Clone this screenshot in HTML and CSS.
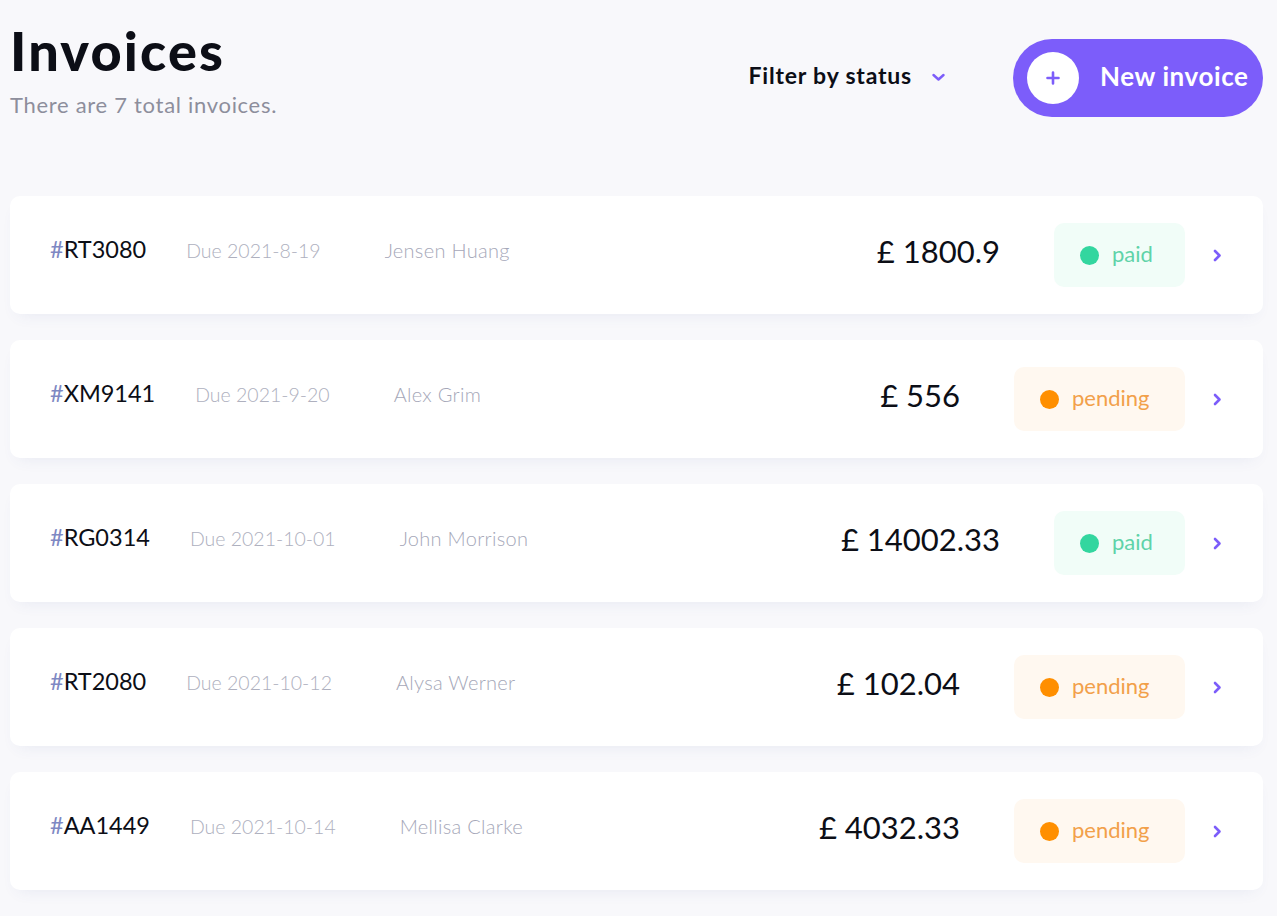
FILE: index.html
```html
<!DOCTYPE html>
<html lang="en">
<head>
<meta charset="utf-8">
<title>Invoices</title>
<link rel="stylesheet" href="styles.css">
</head>
<body>
<main class="page">
  <header class="top">
    <div class="titles">
      <h1 class="title">Invoices</h1>
      <p class="subtitle">There are 7 total invoices.</p>
    </div>
    <div class="actions">
      <button class="filter">Filter by status
        <svg class="filter-chev" width="13" height="9" viewBox="0 0 13 9"><path d="M1.5 2 L6.5 6.5 L11.5 2" fill="none" stroke="#7C5DFA" stroke-width="2.4" stroke-linecap="round" stroke-linejoin="round"/></svg>
      </button>
      <button class="new-btn">
        <span class="plus-circle"><svg width="14" height="14" viewBox="0 0 14 14"><path d="M7 1.5 V12.5 M1.5 7 H12.5" stroke="#7C5DFA" stroke-width="2.6" stroke-linecap="round"/></svg></span>
        <span class="new-label">New invoice</span>
      </button>
    </div>
  </header>

  <section class="list">
    <article class="card">
      <div class="left"><span class="id"><span class="hash">#</span>RT3080</span><span class="due">Due 2021-8-19</span><span class="name">Jensen Huang</span></div>
      <span class="amount">£ 1800.9</span>
      <span class="badge paid"><span class="dot"></span>paid</span>
      <svg class="chev" width="9" height="13" viewBox="0 0 9 13"><path d="M2 2 L6.5 6.5 L2 11" fill="none" stroke="#7C5DFA" stroke-width="2.6" stroke-linecap="round" stroke-linejoin="round"/></svg>
    </article>
    <article class="card">
      <div class="left"><span class="id"><span class="hash">#</span>XM9141</span><span class="due">Due 2021-9-20</span><span class="name">Alex Grim</span></div>
      <span class="amount">£ 556</span>
      <span class="badge pending"><span class="dot"></span>pending</span>
      <svg class="chev" width="9" height="13" viewBox="0 0 9 13"><path d="M2 2 L6.5 6.5 L2 11" fill="none" stroke="#7C5DFA" stroke-width="2.6" stroke-linecap="round" stroke-linejoin="round"/></svg>
    </article>
    <article class="card">
      <div class="left"><span class="id"><span class="hash">#</span>RG0314</span><span class="due">Due 2021-10-01</span><span class="name">John Morrison</span></div>
      <span class="amount">£ 14002.33</span>
      <span class="badge paid"><span class="dot"></span>paid</span>
      <svg class="chev" width="9" height="13" viewBox="0 0 9 13"><path d="M2 2 L6.5 6.5 L2 11" fill="none" stroke="#7C5DFA" stroke-width="2.6" stroke-linecap="round" stroke-linejoin="round"/></svg>
    </article>
    <article class="card">
      <div class="left"><span class="id"><span class="hash">#</span>RT2080</span><span class="due">Due 2021-10-12</span><span class="name">Alysa Werner</span></div>
      <span class="amount">£ 102.04</span>
      <span class="badge pending"><span class="dot"></span>pending</span>
      <svg class="chev" width="9" height="13" viewBox="0 0 9 13"><path d="M2 2 L6.5 6.5 L2 11" fill="none" stroke="#7C5DFA" stroke-width="2.6" stroke-linecap="round" stroke-linejoin="round"/></svg>
    </article>
    <article class="card">
      <div class="left"><span class="id"><span class="hash">#</span>AA1449</span><span class="due">Due 2021-10-14</span><span class="name">Mellisa Clarke</span></div>
      <span class="amount">£ 4032.33</span>
      <span class="badge pending"><span class="dot"></span>pending</span>
      <svg class="chev" width="9" height="13" viewBox="0 0 9 13"><path d="M2 2 L6.5 6.5 L2 11" fill="none" stroke="#7C5DFA" stroke-width="2.6" stroke-linecap="round" stroke-linejoin="round"/></svg>
    </article>
    <div class="card card-peek"></div>
  </section>
</main>
</body>
</html>
```

FILE: styles.css
```css
* { box-sizing: border-box; }

html, body {
  margin: 0;
  padding: 0;
  background: #F8F8FB;
  overflow: hidden;
}

body {
  font-family: "Lato", "Noto Sans", sans-serif;
  color: #0C0E16;
}

.page {
  padding: 20px 14px 0 10px;
}

.top {
  display: flex;
  align-items: flex-start;
  justify-content: space-between;
  height: 176px;
}

.title {
  margin: 0;
  font-size: 54px;
  font-weight: 900;
  line-height: 62px;
  letter-spacing: 2.2px;
}

.subtitle {
  margin: 10px 0 0;
  font-size: 22px;
  font-weight: 400;
  color: #8D8E9C;
  line-height: 26px;
  letter-spacing: 0.7px;
}

.actions {
  display: flex;
  align-items: center;
  gap: 68px;
  margin-top: 19px;
}

.filter {
  display: flex;
  align-items: center;
  gap: 20px;
  border: 0;
  background: none;
  padding: 0 0 6px;
  font-family: inherit;
  font-size: 23px;
  font-weight: 700;
  letter-spacing: 0.8px;
  color: #0C0E16;
}

.filter-chev { margin-top: 4px; }

.new-btn {
  display: flex;
  align-items: center;
  gap: 21px;
  width: 250px;
  height: 78px;
  padding: 0 10px 0 14px;
  border: 0;
  border-radius: 39px;
  background: #7C5DFA;
  font-family: inherit;
  font-size: 26px;
  font-weight: 700;
  letter-spacing: 0.6px;
  color: #FFFFFF;
}

.new-label { margin-top: -4px; }

.plus-circle {
  width: 52px;
  height: 52px;
  border-radius: 50%;
  background: #FFFFFF;
  display: flex;
  align-items: center;
  justify-content: center;
  flex: none;
}

.list {
  display: flex;
  flex-direction: column;
  gap: 26px;
}

.card {
  display: flex;
  align-items: center;
  height: 118px;
  padding: 0 41px 0 40px;
  background: #FFFFFF;
  border-radius: 10px;
  box-shadow: 0 8px 16px -8px rgba(72, 84, 159, 0.10);
  flex: none;
}

.left {
  display: flex;
  align-items: baseline;
  flex: 1;
  padding-bottom: 12px;
}

.id {
  font-size: 23.5px;
  font-weight: 400;
  color: #0C0E16;
  margin-right: 40px;
  letter-spacing: 0;
}

.hash { color: #7E88C3; }

.due {
  font-size: 19.5px;
  font-weight: 300;
  color: #AEB0BE;
  margin-right: 64px;
}

.name {
  font-size: 20px;
  font-weight: 300;
  color: #A5A7B8;
  letter-spacing: 0.3px;
}

.amount {
  font-size: 31px;
  font-weight: 400;
  color: #0C0E16;
  margin-right: 54px;
  padding-bottom: 8px;
}

.badge {
  display: flex;
  align-items: center;
  gap: 13px;
  height: 64px;
  padding: 0 0 4px 26px;
  border-radius: 10px;
  font-size: 22px;
  font-weight: 400;
}

.badge .dot {
  width: 19px;
  height: 19px;
  border-radius: 50%;
  flex: none;
  margin-top: 4px;
}

.paid {
  width: 131px;
  background: #F1FDF8;
  color: #5FD3A8;
}
.paid .dot { background: #33D69F; }

.pending {
  width: 171px;
  background: #FFF8F0;
  color: #F2A04A;
}
.pending .dot { background: #FF8F00; }

.chev {
  margin-left: 28px;
  flex: none;
}
```
